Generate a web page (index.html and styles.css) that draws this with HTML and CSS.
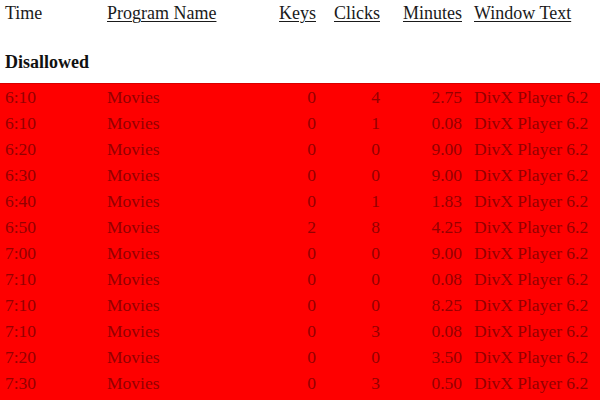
FILE: index.html
```html
<!DOCTYPE html>
<html>
<head>
<meta charset="utf-8">
<link rel="stylesheet" href="styles.css">
</head>
<body>
<div class="row head">
  <span class="c1">Time</span>
  <span class="c2"><u>Program Name</u></span>
  <span class="num"><u>Keys</u></span>
  <span class="num"><u>Clicks</u></span>
  <span class="num"><u>Minutes</u></span>
  <span class="c6"><u>Window Text</u></span>
</div>
<div class="section">Disallowed</div>
<div class="band">
  <div class="row"><span>6:10</span><span>Movies</span><span class="num">0</span><span class="num">4</span><span class="num">2.75</span><span class="c6">DivX Player 6.2</span></div>
  <div class="row"><span>6:10</span><span>Movies</span><span class="num">0</span><span class="num">1</span><span class="num">0.08</span><span class="c6">DivX Player 6.2</span></div>
  <div class="row"><span>6:20</span><span>Movies</span><span class="num">0</span><span class="num">0</span><span class="num">9.00</span><span class="c6">DivX Player 6.2</span></div>
  <div class="row"><span>6:30</span><span>Movies</span><span class="num">0</span><span class="num">0</span><span class="num">9.00</span><span class="c6">DivX Player 6.2</span></div>
  <div class="row"><span>6:40</span><span>Movies</span><span class="num">0</span><span class="num">1</span><span class="num">1.83</span><span class="c6">DivX Player 6.2</span></div>
  <div class="row"><span>6:50</span><span>Movies</span><span class="num">2</span><span class="num">8</span><span class="num">4.25</span><span class="c6">DivX Player 6.2</span></div>
  <div class="row"><span>7:00</span><span>Movies</span><span class="num">0</span><span class="num">0</span><span class="num">9.00</span><span class="c6">DivX Player 6.2</span></div>
  <div class="row"><span>7:10</span><span>Movies</span><span class="num">0</span><span class="num">0</span><span class="num">0.08</span><span class="c6">DivX Player 6.2</span></div>
  <div class="row"><span>7:10</span><span>Movies</span><span class="num">0</span><span class="num">0</span><span class="num">8.25</span><span class="c6">DivX Player 6.2</span></div>
  <div class="row"><span>7:10</span><span>Movies</span><span class="num">0</span><span class="num">3</span><span class="num">0.08</span><span class="c6">DivX Player 6.2</span></div>
  <div class="row"><span>7:20</span><span>Movies</span><span class="num">0</span><span class="num">0</span><span class="num">3.50</span><span class="c6">DivX Player 6.2</span></div>
  <div class="row"><span>7:30</span><span>Movies</span><span class="num">0</span><span class="num">3</span><span class="num">0.50</span><span class="c6">DivX Player 6.2</span></div>
</div>
</body>
</html>
```
FILE: styles.css
```css
html, body {
  margin: 0;
  padding: 0;
  background: #fff;
  overflow: hidden;
}
body {
  font-family: "Liberation Serif", "Times New Roman", serif;
  color: #111;
  height: 400px;
  display: flex;
  flex-direction: column;
}
.row {
  display: grid;
  grid-template-columns: 102px 153px 56px 64px 82px 1fr;
  padding-left: 5px;
  height: 26px;
  line-height: 26px;
  white-space: nowrap;
  flex-shrink: 0;
}
.head {
  font-size: 18px;
  color: #1a1a1a;
}
.head u {
  text-decoration-thickness: 1px;
  text-underline-offset: 2px;
}
.num {
  text-align: right;
}
.c6 {
  padding-left: 12px;
}
.section {
  font-size: 18px;
  font-weight: bold;
  padding: 23px 0 8px 5px;
  height: 26px;
  line-height: 26px;
  color: #111;
  flex-shrink: 0;
}
.band {
  background: #fe0000;
  border-top: 1px solid #d80000;
  font-size: 17.5px;
  color: #940000;
  flex: 1;
  min-height: 0;
  overflow: hidden;
}
```
